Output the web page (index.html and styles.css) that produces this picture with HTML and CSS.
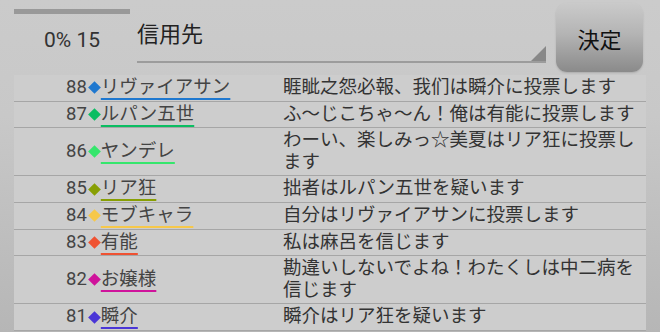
FILE: index.html
```html
<!DOCTYPE html>
<html lang="ja">
<head>
  <meta charset="UTF-8">
  <title>投票</title>
  <link rel="stylesheet" href="styles.css">
</head>
<body>
  <!-- 上部：進捗・対象選択・決定 -->
  <div class="top">
    <div class="progress">
      <div class="bar"></div>
      <div class="count">0% 15</div>
    </div>
    <div class="spinner"><span class="spinner-text">信用先</span></div>
    <button class="decide">決定</button>
  </div>

  <!-- 発言ログ -->
  <div class="log">
    <div class="row">
      <div class="who"><span class="num">88</span><span class="gem c88"></span><span class="name c88">リヴァイアサン</span></div>
      <div class="msg">睚眦之怨必報、我们は瞬介に投票します</div>
    </div>
    <div class="row">
      <div class="who"><span class="num">87</span><span class="gem c87"></span><span class="name c87">ルパン五世</span></div>
      <div class="msg">ふ～じこちゃ～ん！俺は有能に投票します</div>
    </div>
    <div class="row">
      <div class="who"><span class="num">86</span><span class="gem c86"></span><span class="name c86">ヤンデレ</span></div>
      <div class="msg">わーい、楽しみっ☆美夏はリア狂に投票します</div>
    </div>
    <div class="row">
      <div class="who"><span class="num">85</span><span class="gem c85"></span><span class="name c85">リア狂</span></div>
      <div class="msg">拙者はルパン五世を疑います</div>
    </div>
    <div class="row">
      <div class="who"><span class="num">84</span><span class="gem c84"></span><span class="name c84">モブキャラ</span></div>
      <div class="msg">自分はリヴァイアサンに投票します</div>
    </div>
    <div class="row">
      <div class="who"><span class="num">83</span><span class="gem c83"></span><span class="name c83">有能</span></div>
      <div class="msg">私は麻呂を信じます</div>
    </div>
    <div class="row">
      <div class="who"><span class="num">82</span><span class="gem c82"></span><span class="name c82">お嬢様</span></div>
      <div class="msg">勘違いしないでよね！わたくしは中二病を信じます</div>
    </div>
    <div class="row">
      <div class="who"><span class="num">81</span><span class="gem c81"></span><span class="name c81">瞬介</span></div>
      <div class="msg">瞬介はリア狂を疑います</div>
    </div>
  </div>
</body>
</html>
```

FILE: styles.css
```css
/* 全体 */
body {
  margin: 0;
  height: 332px;
  overflow: hidden;
  font-family: Roboto, "Noto Sans CJK JP", sans-serif;
  color: #333;
  background: linear-gradient(to bottom, #cbcbcb 0%, #c8c8c8 35%, #b6b6b6 100%);
}

/* 上部 */
.top {
  display: flex;
  height: 75px;
}
.progress {
  width: 116px;
  margin-left: 14px;
  padding-top: 9px;
}
.bar {
  height: 5px;
  background-color: #999;
}
.count {
  margin-top: 14px;
  text-align: center;
  font-size: 21px;
  line-height: 24px;
  color: #333;
}
.spinner {
  position: relative;
  width: 409px;
  height: 61px;
  margin-left: 7px;
  border-bottom: 2px solid #9c9c9c;
}
.spinner::after {
  content: "";
  position: absolute;
  right: 0;
  bottom: 0;
  width: 15px;
  height: 15px;
  background-color: #888;
  clip-path: polygon(100% 0, 100% 100%, 0 100%);
}
.spinner-text {
  display: block;
  padding-top: 22px;
  font-size: 22px;
  line-height: 26px;
  color: #222;
}
.decide {
  width: 87px;
  height: 69px;
  margin: 3px 0 0 10px;
  border: none;
  border-radius: 11px;
  background: linear-gradient(to bottom, #cacaca 0%, #b4b4b4 45%, #8a8a8a 100%);
  box-shadow: 0 1px 2px rgba(0, 0, 0, 0.15);
  font-family: "Noto Sans CJK JP", sans-serif;
  font-size: 22px;
  color: #111;
  padding: 0;
}

/* ログ */
.log {
  width: 632px;
  margin-left: 14px;
  background-color: #cdcdcd;
}
.row {
  display: grid;
  grid-template-columns: 269px 1fr;
  border-bottom: 1px solid #a6a6a6;
  font-size: 18.5px;
  line-height: 21.6px;
}
.who {
  display: flex;
  align-items: center;
  padding: 2px 0 2px 52px;
  color: #444;
}
.msg {
  padding: 2px 0;
  color: #333;
}
.gem {
  width: 9px;
  height: 9px;
  margin: 0 2px 0 3px;
  transform: rotate(45deg);
}
.name {
  text-decoration: underline;
  text-decoration-thickness: 2px;
  text-underline-offset: 5px;
  color: #444;
}

/* プレイヤー色 */
.gem.c88 { background-color: #1f78cf; }
.gem.c87 { background-color: #0bbd62; }
.gem.c86 { background-color: #35e66c; }
.gem.c85 { background-color: #889f04; }
.gem.c84 { background-color: #f6c84a; }
.gem.c83 { background-color: #ef5232; }
.gem.c82 { background-color: #cf139b; }
.gem.c81 { background-color: #4a36d6; }
.name.c88 { text-decoration-color: #1f78cf; }
.name.c87 { text-decoration-color: #0bbd62; }
.name.c86 { text-decoration-color: #35e66c; }
.name.c85 { text-decoration-color: #889f04; }
.name.c84 { text-decoration-color: #f6c84a; }
.name.c83 { text-decoration-color: #ef5232; }
.name.c82 { text-decoration-color: #cf139b; }
.name.c81 { text-decoration-color: #4a36d6; }
```
